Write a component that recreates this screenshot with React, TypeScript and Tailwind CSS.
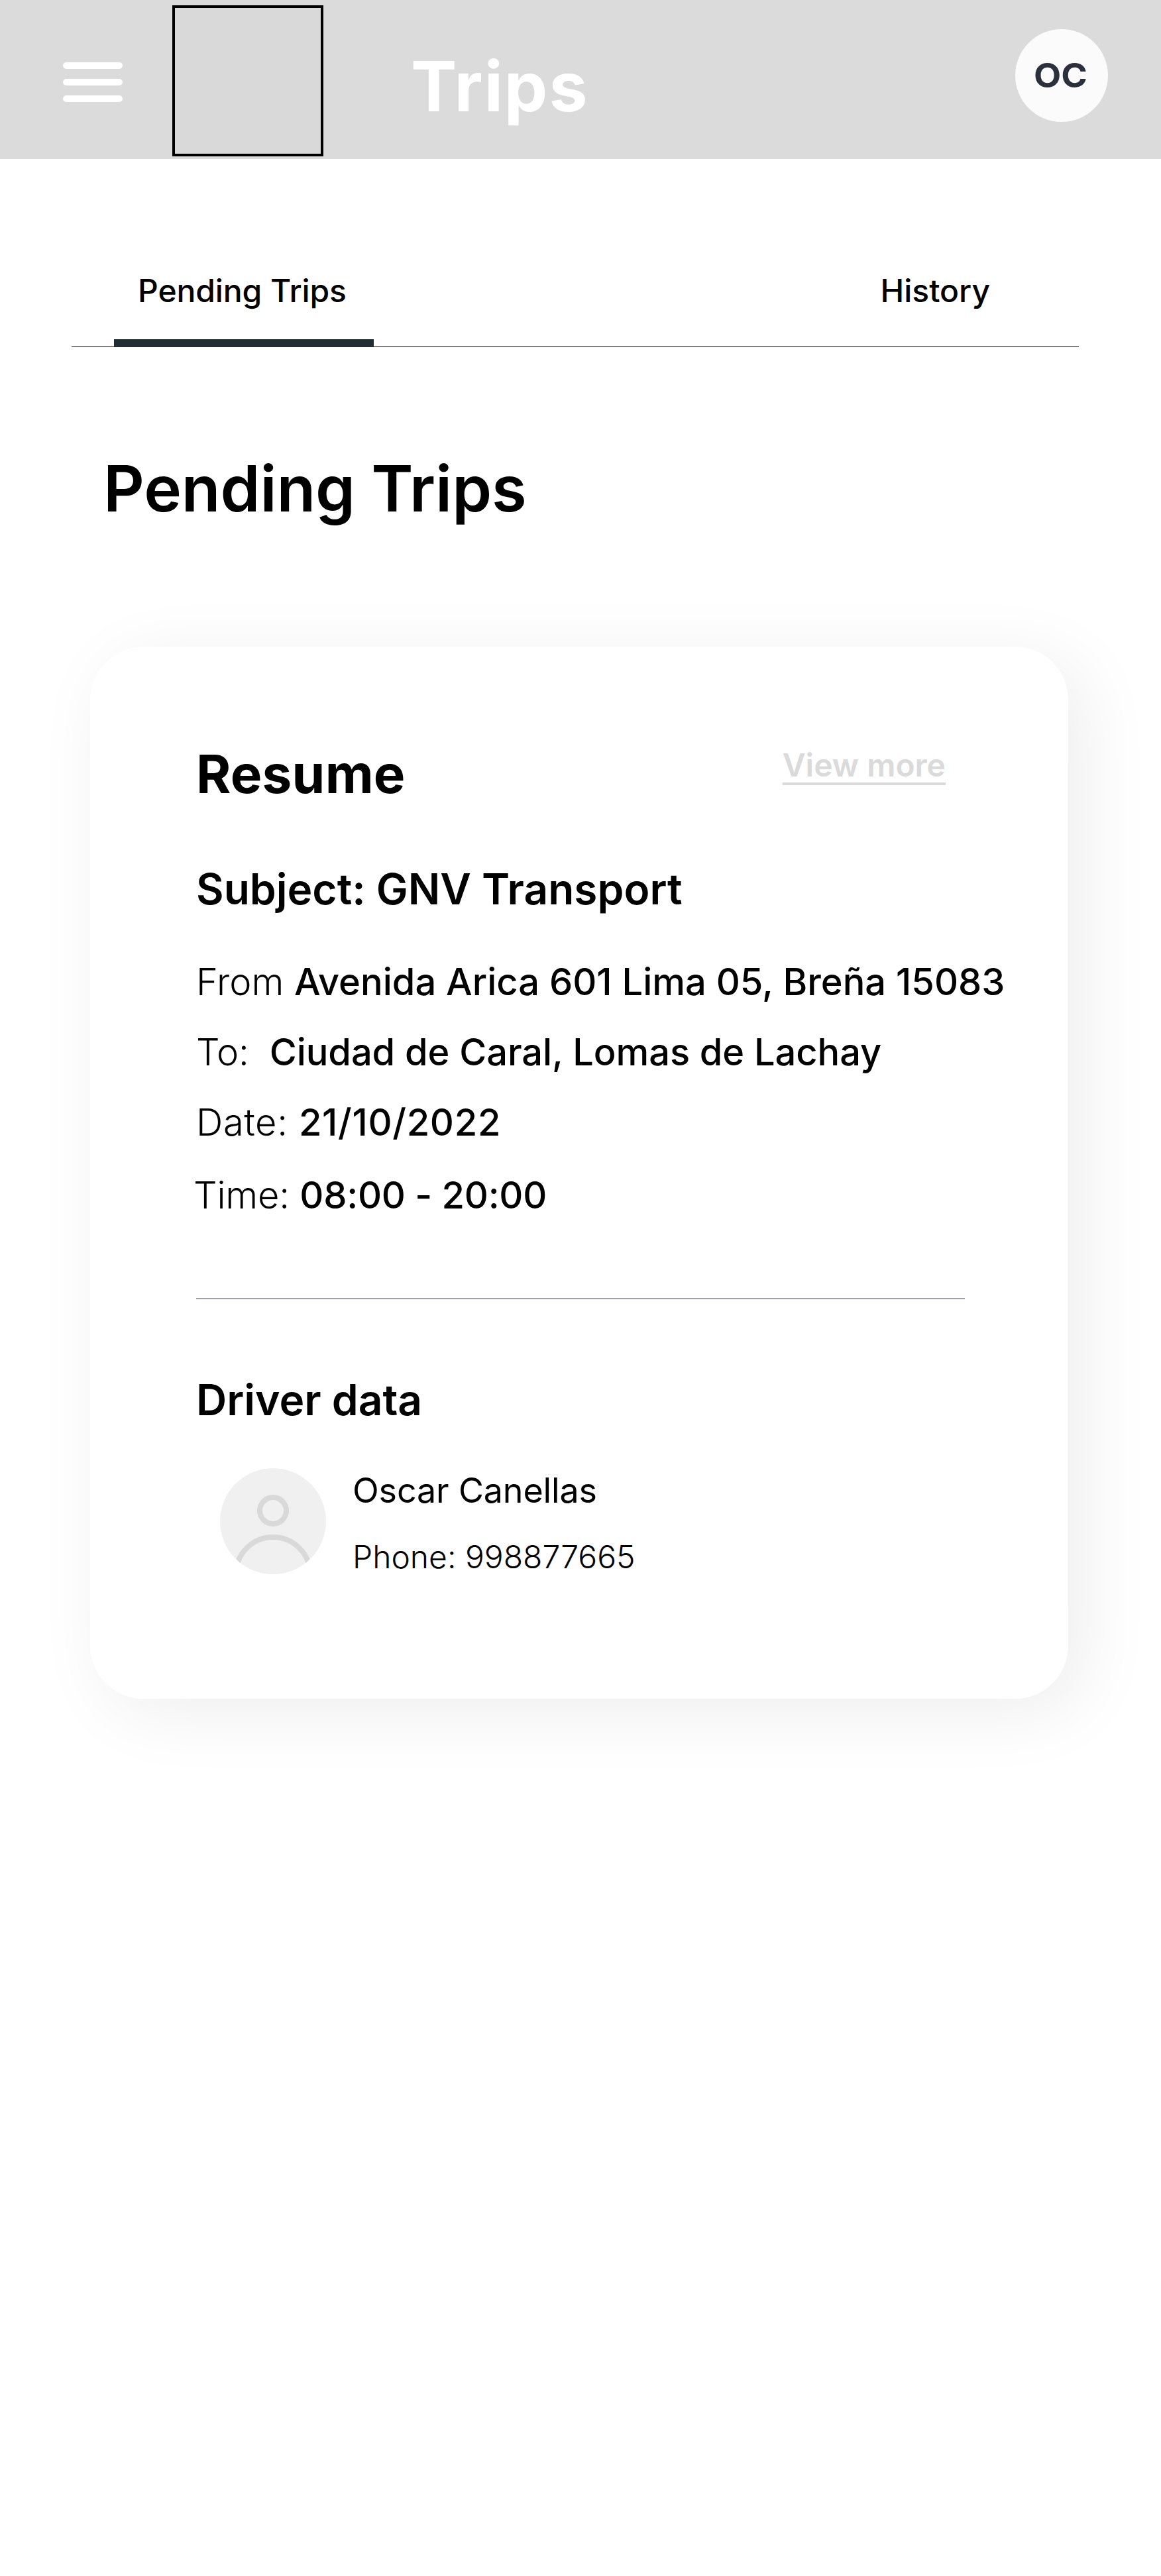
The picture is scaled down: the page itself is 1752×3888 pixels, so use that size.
import type { ReactNode } from "react";

function MenuButton() {
  return (
    <button type="button" aria-label="Menu" className="mt-[94px] ml-[95px] flex w-[90px] flex-col gap-[15px]">
      <span className="h-[10px] w-full rounded-[5px] bg-white" />
      <span className="h-[10px] w-full rounded-[5px] bg-white" />
      <span className="h-[10px] w-full rounded-[5px] bg-white" />
    </button>
  );
}

function Header() {
  return (
    <header className="flex h-[240px] items-start bg-[#dbdbdb]">
      <MenuButton />
      <div className="mt-2 ml-[75px] h-[228px] w-[228px] border-4 border-black bg-[#d9d9d9]" />
      <h1 className="mt-[67px] ml-[132px] text-[104px] leading-[126px] font-bold tracking-[2px] text-white">Trips</h1>
      <div className="mt-[44px] mr-[80px] ml-auto flex h-[140px] w-[140px] justify-center rounded-full bg-[#fbfbfb]">
        <span className="mt-[39px] mr-[3px] scale-x-105 text-[51px] leading-[61px] font-bold text-[#2b303c]">OC</span>
      </div>
    </header>
  );
}

function Tabs() {
  return (
    <nav className="mt-[169px] mr-[124px] ml-[108px] flex h-[115px] justify-between border-b-2 border-[#808080]">
      <button
        type="button"
        className="ml-16 flex h-[115px] w-[392px] items-start border-b-12 border-[#202d31] pl-9 text-[48px] leading-[59px] font-medium tracking-[-0.1px] whitespace-nowrap"
      >
        Pending Trips
      </button>
      <button type="button" className="mr-[134px] flex items-start text-[48px] leading-[59px] font-medium">
        History
      </button>
    </nav>
  );
}

type DetailProps = { label: string; className?: string; labelClass?: string; valueClass?: string; children: ReactNode };

function Detail({ label, className = "", labelClass = "", valueClass = "", children }: DetailProps) {
  return (
    <p className={className}>
      <span className={`font-light ${labelClass}`}>{label}</span>
      <span className={`font-medium ${valueClass}`}>{children}</span>
    </p>
  );
}

function DriverAvatar() {
  return (
    <svg viewBox="0 0 160 160" className="h-[160px] w-[160px]" fill="none">
      <defs>
        <clipPath id="avatar-circle">
          <circle cx="80" cy="80" r="80" />
        </clipPath>
      </defs>
      <circle cx="80" cy="80" r="80" fill="#f0f0f0" />
      <g clipPath="url(#avatar-circle)" stroke="#d9d9d9" strokeWidth="8">
        <circle cx="80" cy="64" r="20" />
        <circle cx="80" cy="160" r="56" />
      </g>
    </svg>
  );
}

function TripCard() {
  return (
    <article className="mt-[181px] ml-[136px] h-[1588px] w-[1476px] rounded-[80px] bg-white pt-[143px] pl-[160px] shadow-[24px_20px_108px_rgba(0,0,0,0.07)]">
      <div className="flex items-start">
        <h3 className="text-[80px] leading-[97px] font-bold tracking-[0.2px]">Resume</h3>
        <a className="mt-[6px] mr-[185px] ml-auto text-[48px] leading-[59px] font-semibold text-[#dadada] underline decoration-4 underline-offset-[9px] [text-decoration-skip-ink:none]">
          View more
        </a>
      </div>
      <h4 className="mt-[87px] text-[64px] leading-[77px] font-semibold">Subject: GNV Transport</h4>
      <div className="mt-[68px] flex flex-col text-[56px] leading-[68px] whitespace-pre">
        <Detail label="From ">Avenida Arica 601 Lima 05, Breña 15083</Detail>
        <Detail label="To:  " className="mt-[38px]" labelClass="tracking-[-0.2px]" valueClass="tracking-[-0.08px]">
          Ciudad de Caral, Lomas de Lachay
        </Detail>
        <Detail label="Date: " className="mt-[38px]" labelClass="tracking-[0.6px]" valueClass="tracking-[0.7px]">
          21/10/2022
        </Detail>
        <Detail label="Time: " className="mt-[42px] -ml-1" labelClass="tracking-[-0.2px]" valueClass="tracking-[-0.28px]">
          08:00 - 20:00
        </Detail>
      </div>
      <div className="mt-[121px] h-[2px] w-[1160px] bg-[#9c9eaa]" />
      <h4 className="mt-[113px] text-[64px] leading-[77px] font-semibold">Driver data</h4>
      <div className="mt-[65px] ml-9 flex items-start gap-10">
        <DriverAvatar />
        <div className="mt-[2px]">
          <p className="text-[52px] leading-[63px] tracking-[-0.15px]">Oscar Canellas</p>
          <p className="mt-[39px] text-[48px] leading-[59px] font-light">Phone: 998877665</p>
        </div>
      </div>
    </article>
  );
}

export default function App() {
  return (
    <div className="h-[3888px] w-[1752px] overflow-hidden bg-white font-['Inter',sans-serif] text-black">
      <Header />
      <Tabs />
      <h2 className="mt-[155px] ml-[156px] text-[96px] leading-[116px] font-semibold tracking-[-0.06px]">Pending Trips</h2>
      <TripCard />
    </div>
  );
}
